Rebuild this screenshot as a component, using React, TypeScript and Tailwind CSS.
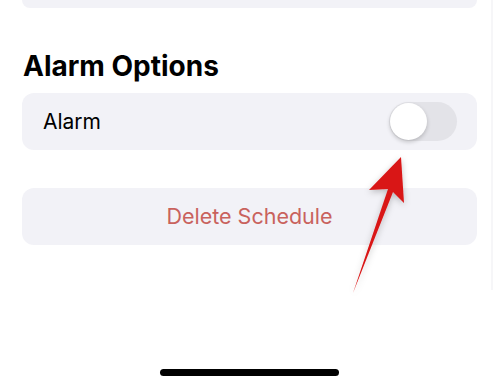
import React from "react";

export default function App() {
  return (
    <div
      className="relative w-[500px] h-[387px] overflow-hidden bg-white"
      style={{ fontFamily: "Inter, 'Noto Sans', sans-serif" }}
    >
      <div className="absolute left-[491px] top-0 w-[2px] h-[290px] bg-[#f6f6f8]" />
      <div className="ml-[22px] w-[455px] h-[8px] rounded-b-[12px] bg-[#f2f2f7]" />
      <div className="ml-[23px] mt-[42px] text-[28px] leading-[32px] font-bold text-black tracking-[0px]">
        Alarm Options
      </div>
      <div className="ml-[22px] mt-[11px] w-[455px] h-[57px] rounded-[12px] bg-[#f2f2f7] flex items-center pl-[21px] pr-[20px]">
        <span className="text-[21px] text-black flex-1">Alarm</span>
        <div className="w-[68px] h-[39px] rounded-full bg-[#e3e3e8] p-[1px] flex items-center">
          <div className="w-[37px] h-[37px] rounded-full bg-white shadow-[0_2px_4px_rgba(0,0,0,0.2)]" />
        </div>
      </div>
      <div className="ml-[22px] mt-[38px] w-[455px] h-[57px] rounded-[12px] bg-[#f2f2f7] flex items-center justify-center">
        <span className="text-[21.5px] text-[#c9625d]">Delete Schedule</span>
      </div>
      <div className="absolute left-[160px] top-[369px] w-[179px] h-[7px] rounded-full bg-black" />
      <svg className="absolute left-0 top-0" width="500" height="387" viewBox="0 0 500 387">
        <defs>
          <filter id="sh" x="-50%" y="-50%" width="200%" height="200%">
            <feDropShadow dx="0" dy="2" stdDeviation="3" floodColor="#000" floodOpacity="0.25" />
          </filter>
        </defs>
        <polygon
          points="401,157 404,203 393,192 353,293 388,189 369,190"
          fill="#d91616"
          filter="url(#sh)"
        />
      </svg>
    </div>
  );
}
